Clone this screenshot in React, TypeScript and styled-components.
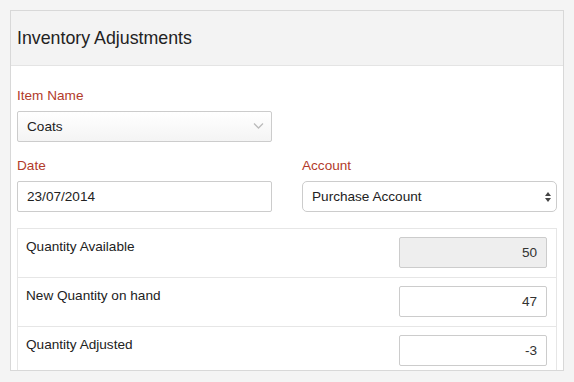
import React from 'react';
import styled, { createGlobalStyle } from 'styled-components';

const GlobalStyle = createGlobalStyle`
  html, body {
    margin: 0;
    padding: 0;
    background: #f4f4f4;
    font-family: "Liberation Sans", Arial, sans-serif;
    color: #222;
  }
`;

const Page = styled.div`
  padding: 10px;
`;

const Panel = styled.div`
  height: 361px;
  overflow: hidden;
  background: #fff;
  border: 1px solid #d8d8d8;
  box-sizing: border-box;
`;

const Header = styled.div`
  height: 55px;
  box-sizing: border-box;
  background: #f3f3f3;
  border-bottom: 1px solid #e4e4e4;
  display: flex;
  align-items: center;
  padding: 0 6px;
`;

const Title = styled.h1`
  margin: 0;
  font-size: 17.8px;
  font-weight: normal;
  color: #222;
`;

const Body = styled.div`
  padding: 22px 6px 0;
`;

const FormGrid = styled.div`
  display: grid;
  grid-template-columns: 255px 255px;
  column-gap: 30px;
  row-gap: 16px;
  margin-bottom: 16px;
`;

const Field = styled.div`
  display: flex;
  flex-direction: column;
`;

const Label = styled.label`
  font-size: 13.6px;
  line-height: 16px;
  color: #b23b2b;
  margin-bottom: 7px;
`;

const Control = styled.div<{ $variant?: 'combo' | 'native' | 'text' }>`
  position: relative;
  height: 31px;
  box-sizing: border-box;
  border: 1px solid #ccc;
  border-radius: ${(p) => (p.$variant === 'native' ? '5px' : '2px')};
  background: ${(p) =>
    p.$variant === 'combo' ? 'linear-gradient(#ffffff, #f4f4f4)' : '#fff'};
  display: flex;
  align-items: center;
  padding: 0 9px;
  font-size: 13.6px;
  color: #222;
`;

const Chevron = styled.svg`
  position: absolute;
  right: 7px;
  top: 10px;
`;

const Arrows = styled.svg`
  position: absolute;
  right: 4px;
  top: 9px;
`;

const Table = styled.div`
  border: 1px solid #e6e6e6;
  border-bottom: none;
`;

const Row = styled.div`
  display: flex;
  justify-content: space-between;
  align-items: flex-start;
  padding: 8px 9px 9px 8px;
  border-bottom: 1px solid #e6e6e6;
`;

const RowLabel = styled.div`
  font-size: 13.6px;
  line-height: 16px;
  padding-top: 2px;
  color: #222;
`;

const NumberBox = styled.div<{ $readOnly?: boolean }>`
  width: 148px;
  height: 31px;
  box-sizing: border-box;
  border: 1px solid #ccc;
  border-radius: 2px;
  background: ${(p) => (p.$readOnly ? '#eeeeee' : '#fff')};
  display: flex;
  align-items: center;
  justify-content: flex-end;
  padding: 0 9px;
  font-size: 13.6px;
  color: #333;
`;

const rows = [
  { label: 'Quantity Available', value: '50', readOnly: true },
  { label: 'New Quantity on hand', value: '47' },
  { label: 'Quantity Adjusted', value: '-3' },
];

const App: React.FC = () => {
  return (
    <Page>
      <GlobalStyle />
      <Panel>
        <Header>
          <Title>Inventory Adjustments</Title>
        </Header>
        <Body>
          <FormGrid>
            <Field>
              <Label>Item Name</Label>
              <Control $variant="combo">
                Coats
                <Chevron width="11" height="8" viewBox="0 0 11 8">
                  <path d="M1 1.5 L5.5 6 L10 1.5" fill="none" stroke="#bbb" strokeWidth="1.3" />
                </Chevron>
              </Control>
            </Field>
            <div />
            <Field>
              <Label>Date</Label>
              <Control $variant="text">23/07/2014</Control>
            </Field>
            <Field>
              <Label>Account</Label>
              <Control $variant="native">
                Purchase Account
                <Arrows width="8" height="12" viewBox="0 0 8 12">
                  <path d="M4 1 L7 5 L1 5 Z" fill="#444" />
                  <path d="M4 11 L7 7 L1 7 Z" fill="#444" />
                </Arrows>
              </Control>
            </Field>
          </FormGrid>
          <Table>
            {rows.map((r) => (
              <Row key={r.label}>
                <RowLabel>{r.label}</RowLabel>
                <NumberBox $readOnly={r.readOnly}>{r.value}</NumberBox>
              </Row>
            ))}
          </Table>
        </Body>
      </Panel>
    </Page>
  );
};

export default App;
